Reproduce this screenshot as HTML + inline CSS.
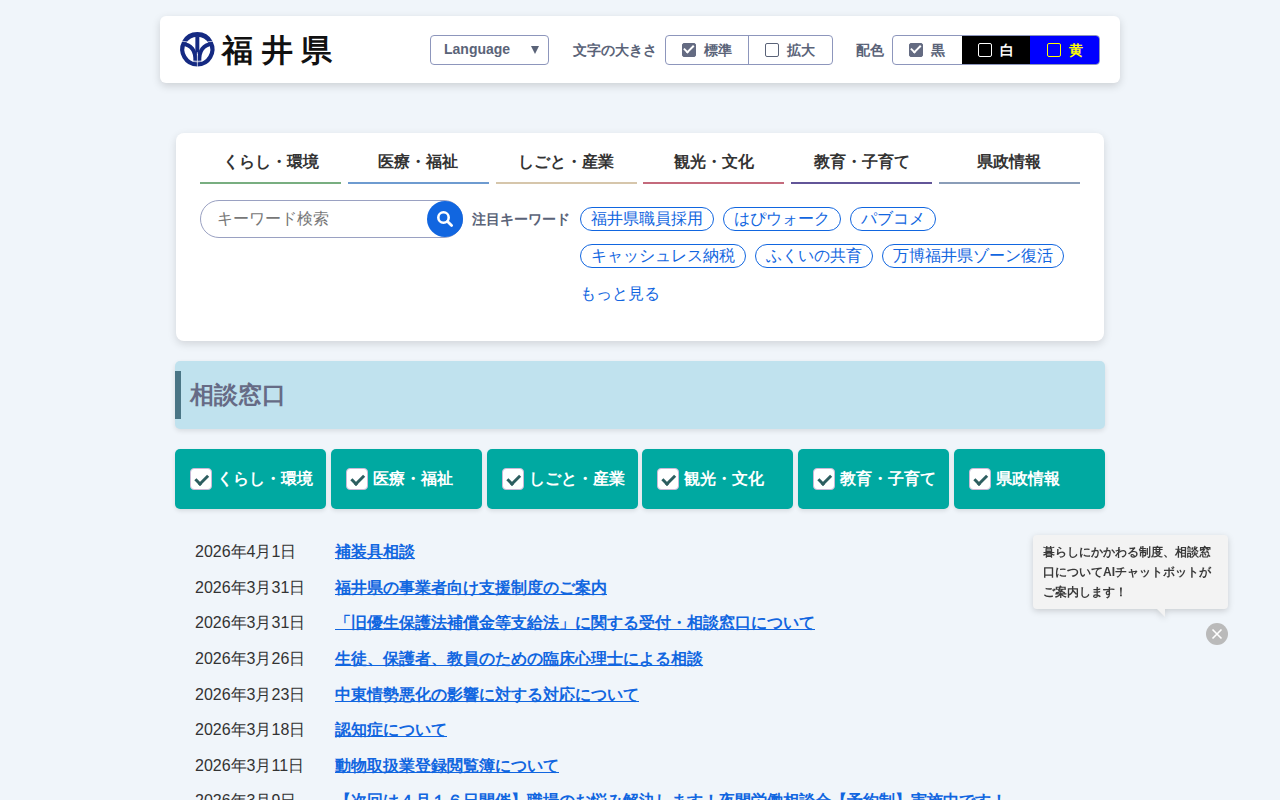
<!DOCTYPE html>
<html lang="ja">
<head>
<meta charset="utf-8">
<title>相談窓口 | 福井県ホームページ</title>
<style>
*{box-sizing:border-box;margin:0;padding:0}
html,body{width:1280px;height:800px;overflow:hidden}
body{background:#f0f5fa;font-family:"Liberation Sans",sans-serif;color:#333;position:relative}
.abs{position:absolute}
/* header */
#hdr{left:160px;top:16px;width:960px;height:67px;background:#fff;border-radius:6px;box-shadow:0 3px 8px rgba(0,0,0,.15)}
#logo{left:16px;top:12px;width:44px;height:44px}
#ttl{left:62px;top:15px;font-size:31px;letter-spacing:8.6px;color:#111;font-weight:bold;line-height:40px;white-space:nowrap}
#lang{left:270px;top:19px;width:119px;height:30px;border:1px solid #8d96bc;border-radius:4px;font-size:14px;font-weight:bold;color:#5a6378;line-height:27px;padding-left:13px}
#lang span{position:absolute;left:100px;top:10px;width:0;height:0;border-left:4.5px solid transparent;border-right:4.5px solid transparent;border-top:8.5px solid #5a6378}
.lbl{font-size:14px;color:#5a6378;line-height:20px;font-weight:bold;white-space:nowrap}
#fs{left:413px;top:24px}
.grp{top:19px;height:30px;border:1px solid #8d96bc;border-radius:4px;display:flex;overflow:hidden}
.grp div{height:28px;font-size:14px;color:#5a6378;font-weight:bold;display:flex;align-items:center;justify-content:center;white-space:nowrap}
.t{position:relative;top:1px}
.cb{display:inline-block;width:14px;height:14px;border:1px solid #5a6378;border-radius:2px;margin-right:8px;position:relative;background:#fff;flex:none}
.cb.on{background:#646b82;border-color:#646b82}
.cb.on::after{content:"";position:absolute;left:2.8px;top:-0.6px;width:4px;height:7.5px;border:solid #fff;border-width:0 2px 2px 0;transform:rotate(45deg)}
#g1{left:505px;width:168px}
#g1 div{width:82px}
#g1 div+div{border-left:1px solid #8d96bc;width:84px}
#hc{left:696px;top:24px}
#g2{left:732px;width:208px}

/* nav card */
#nav{left:176px;top:133px;width:928px;height:208px;background:#fff;border-radius:8px;box-shadow:0 3px 8px rgba(0,0,0,.13)}
#tabs{left:24px;top:16px;width:880px;height:35px;display:flex;justify-content:space-between}
#tabs div{width:141px;height:35px;border-bottom:2px solid #999;text-align:center;font-size:16px;font-weight:bold;color:#333;line-height:26px}
#srch{left:24px;top:67px;width:263px;height:38px;border:1px solid #9aa1c2;border-radius:19px;font-size:16px;color:#777;line-height:36px;padding-left:16px}
#sbtn{left:251px;top:68px;width:36px;height:36px;border-radius:50%;background:#1166e0}
#kwl{left:296px;top:76px;font-size:14px;font-weight:bold;color:#5a6378;line-height:20px;white-space:nowrap}
.tag{position:absolute;height:24px;border:1px solid #1166e0;border-radius:12px;font-size:16px;color:#1166e0;line-height:22px;padding:0 10px;white-space:nowrap}
#more{left:404px;top:150px;font-size:16px;color:#1166e0;line-height:22px}

/* heading */
#h1{left:175px;top:361px;width:930px;height:68px;background:#c0e2ee;border-radius:5px;box-shadow:0 2px 5px rgba(0,0,0,.10)}
#h1 i{position:absolute;left:0;top:10px;width:6px;height:48px;background:#4a7585}
#h1 span{position:absolute;left:15px;top:18px;font-size:24px;font-weight:bold;color:#666b85;line-height:32px}

/* categories */
.cat{position:absolute;top:449px;width:151px;height:60px;background:#00a9a1;border-radius:5px;box-shadow:0 2px 4px rgba(0,0,0,.10);color:#fff;font-size:16px;font-weight:bold;line-height:20px;white-space:nowrap}
.cat i{position:absolute;left:15px;top:19px;width:22px;height:22px;background:#fff;border:1px solid #c9b9d6;border-radius:4px}
.cat i::after{content:"";position:absolute;left:6.5px;top:3px;width:4.5px;height:9.5px;border:solid #2d5e60;border-width:0 3px 3px 0;transform:rotate(45deg)}
.cat span{position:absolute;left:42px;top:20px}

/* list */
.row{position:absolute;left:195px;font-size:16px;line-height:24px;white-space:nowrap}
.row b{position:absolute;left:140px;top:0;color:#1166e0;text-decoration:underline;font-weight:bold}

/* chat */
#tip{left:1033px;top:535px;width:195px;height:74px;background:#f3f3f3;border-radius:4px;filter:drop-shadow(0 2px 3px rgba(0,0,0,.16));font-size:12px;font-weight:bold;color:#3a3a3a;line-height:20px;padding:7px 0 0 10px}
#tip::after{content:"";position:absolute;left:124px;top:74px;border-style:solid;border-width:0 8px 8px 0;border-color:transparent #f3f3f3 transparent transparent}
#cls{left:1206px;top:623px;width:22px;height:22px;border-radius:50%;background:#bababa}
</style>
</head>
<body>
<div id="hdr" class="abs">
  <svg id="logo" class="abs" viewBox="0 0 800 800">
    <g fill="none" stroke="#152a82">
      <path d="M147,260 A273,273 0 0 1 629,260" stroke-width="84"/>
      <path d="M629,260 A273,273 0 1 1 147,260" stroke-width="76"/>
      <line x1="388" y1="150" x2="388" y2="470" stroke-width="72"/>
      <path d="M115,292 C 270,300 362,410 352,610" stroke-width="74"/>
      <path d="M661,292 C 506,300 414,410 424,610" stroke-width="74"/>
    </g>
    <g stroke="#fff" stroke-width="12" fill="none">
      <line x1="80" y1="238" x2="200" y2="250"/>
      <line x1="696" y1="238" x2="576" y2="250"/>
      <line x1="389" y1="440" x2="389" y2="720"/>
      <path d="M290,598 Q389,612 488,598"/>
    </g>
  </svg>
  <div id="ttl" class="abs">福井県</div>
  <div id="lang" class="abs">Language<span></span></div>
  <div id="fs" class="abs lbl">文字の大きさ</div>
  <div id="g1" class="abs grp"><div><i class="cb on"></i><span class="t">標準</span></div><div style="padding-right:1px"><i class="cb"></i><span class="t">拡大</span></div></div>
  <div id="hc" class="abs lbl">配色</div>
  <div id="g2" class="abs grp"><div style="width:68.7px"><i class="cb on"></i><span class="t">黒</span></div><div style="width:68.5px;background:#000;color:#fff"><i class="cb" style="background:#000;border-color:#fff"></i><span class="t">白</span></div><div style="width:68.8px;background:#00f;color:#ff0"><i class="cb" style="background:#00f;border-color:#ff0"></i><span class="t">黄</span></div></div>
</div>

<div id="nav" class="abs">
  <div id="tabs" class="abs">
    <div style="border-color:#78ae80">くらし・環境</div>
    <div style="border-color:#6e9bd0">医療・福祉</div>
    <div style="border-color:#d6c6ab">しごと・産業</div>
    <div style="border-color:#c46a7c">観光・文化</div>
    <div style="border-color:#625598">教育・子育て</div>
    <div style="border-color:#8a9db8">県政情報</div>
  </div>
  <div id="srch" class="abs">キーワード検索</div>
  <div id="sbtn" class="abs"><svg width="36" height="36" viewBox="0 0 36 36"><circle cx="16.5" cy="16.5" r="5.2" fill="none" stroke="#fff" stroke-width="2.6"/><line x1="20.5" y1="20.5" x2="24.6" y2="24.6" stroke="#fff" stroke-width="2.8" stroke-linecap="round"/></svg></div>
  <div id="kwl" class="abs">注目キーワード</div>
  <div class="tag" style="left:404px;top:74px">福井県職員採用</div>
  <div class="tag" style="left:547px;top:74px">はぴウォーク</div>
  <div class="tag" style="left:674px;top:74px">パブコメ</div>
  <div class="tag" style="left:404px;top:111px">キャッシュレス納税</div>
  <div class="tag" style="left:579px;top:111px">ふくいの共育</div>
  <div class="tag" style="left:705.5px;top:111px">万博福井県ゾーン復活</div>
  <div id="more" class="abs">もっと見る</div>
</div>

<div id="h1" class="abs"><i></i><span>相談窓口</span></div>

<div class="cat" style="left:175px"><i></i><span>くらし・環境</span></div>
<div class="cat" style="left:331px"><i></i><span>医療・福祉</span></div>
<div class="cat" style="left:487px"><i></i><span>しごと・産業</span></div>
<div class="cat" style="left:642px"><i></i><span>観光・文化</span></div>
<div class="cat" style="left:798px"><i></i><span>教育・子育て</span></div>
<div class="cat" style="left:954px"><i></i><span>県政情報</span></div>

<div class="row" style="top:540.00px">2026年4月1日<b>補装具相談</b></div>
<div class="row" style="top:575.62px">2026年3月31日<b>福井県の事業者向け支援制度のご案内</b></div>
<div class="row" style="top:611.25px">2026年3月31日<b>「旧優生保護法補償金等支給法」に関する受付・相談窓口について</b></div>
<div class="row" style="top:646.88px">2026年3月26日<b>生徒、保護者、教員のための臨床心理士による相談</b></div>
<div class="row" style="top:682.50px">2026年3月23日<b>中東情勢悪化の影響に対する対応について</b></div>
<div class="row" style="top:718.12px">2026年3月18日<b>認知症について</b></div>
<div class="row" style="top:753.75px">2026年3月11日<b>動物取扱業登録閲覧簿について</b></div>
<div class="row" style="top:789.38px">2026年3月9日<b>【次回は４月１６日開催】職場のお悩み解決します！夜間労働相談会【予約制】実施中です！</b></div>

<div id="tip" class="abs">暮らしにかかわる制度、相談窓<br>口についてAIチャットボットが<br>ご案内します！</div>
<div id="cls" class="abs"><svg width="22" height="22" viewBox="0 0 22 22"><path d="M6.5,6.5 L15.5,15.5 M15.5,6.5 L6.5,15.5" stroke="#fff" stroke-width="1.6"/></svg></div>
</body>
</html>
